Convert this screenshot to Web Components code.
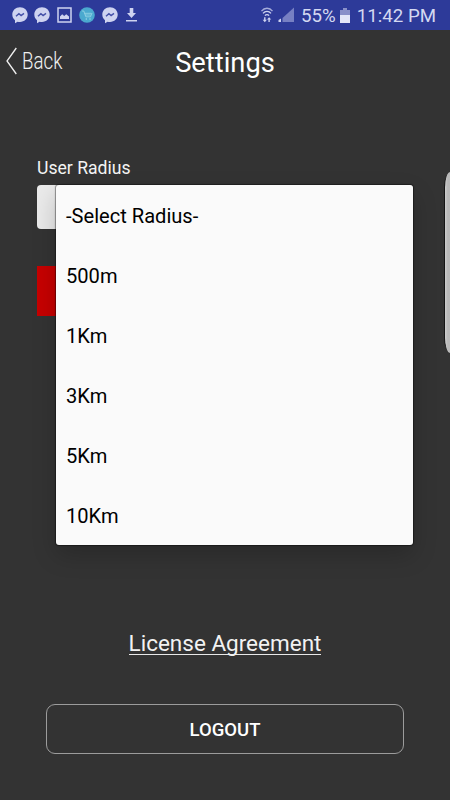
<!DOCTYPE html>
<html lang="en">
<head>
<meta charset="utf-8">
<title>Settings</title>
<style>
  body {
    margin: 0;
    width: 450px;
    height: 800px;
    overflow: hidden;
    background: #333;
    font-family: Roboto, "Liberation Sans", sans-serif;
  }
</style>
</head>
<body>
<settings-page>
  <status-bar slot="status" battery="55%" time="11:42 PM"></status-bar>
  <nav-bar slot="nav" back="Back">Settings</nav-bar>
  <radius-field label="User Radius">
    <radius-menu>
      <radius-option>-Select Radius-</radius-option>
      <radius-option>500m</radius-option>
      <radius-option>1Km</radius-option>
      <radius-option>3Km</radius-option>
      <radius-option>5Km</radius-option>
      <radius-option>10Km</radius-option>
    </radius-menu>
  </radius-field>
  <text-link slot="footer">License Agreement</text-link>
  <outline-button slot="footer">LOGOUT</outline-button>
</settings-page>

<script>
const define = (name, html) => {
  if (customElements.get(name)) return;
  customElements.define(
    name,
    class extends HTMLElement {
      constructor() {
        super();
        const shadowRoot = this.attachShadow({ mode: 'open' });
        shadowRoot.innerHTML = html;
        // [data-attr] nodes show the value of the host attribute
        shadowRoot.querySelectorAll('[data-attr]').forEach(node => {
          node.textContent = this.getAttribute(node.dataset.attr);
        });
      }
    }
  );
};

define('settings-page', `
  <style>
    :host {
      display: flex;
      flex-direction: column;
      position: relative;
      width: 450px;
      height: 800px;
      background: #333;
      overflow: hidden;
    }
    main { flex: 1; padding: 63px 37px 0; }
    footer {
      display: flex;
      flex-direction: column;
      align-items: center;
      gap: 49px;
      padding: 0 46px 46px;
    }
    /* edge panel handle */
    .edge {
      position: absolute;
      left: 444px;
      top: 172px;
      width: 12px;
      height: 181px;
      box-sizing: border-box;
      border-left: 1px solid #161616;
      border-radius: 7px / 18px;
      background: linear-gradient(90deg, #cdcdcd, #b9b9b9 25%, #bcbcbc);
    }
  </style>
  <slot name="status"></slot>
  <slot name="nav"></slot>
  <main><slot></slot></main>
  <footer><slot name="footer"></slot></footer>
  <div class="edge"></div>
`);

define('messenger-icon', `
  <style>
    :host { display: block; width: 16px; height: 17px; }
    svg { display: block; }
  </style>
  <svg width="16" height="17" viewBox="0 0 16 17">
    <path fill="#ced3f0" d="M8 .3C3.600.3.3 3.500.3 7.600c0 2.300 1 4.300 2.700 5.700v2.900l2.600-1.500c.8.200 1.500.3 2.400.3 4.400 0 7.700-3.200 7.700-7.400S12.400.3 8 .3z"/>
    <path d="M4 9.300 6.900 6.700l2.200 1.900 2.900-2.200" fill="none" stroke="#4450a8" stroke-width="1.400"/>
  </svg>
`);

define('status-bar', `
  <style>
    :host {
      display: flex;
      justify-content: space-between;
      align-items: center;
      box-sizing: border-box;
      height: 30px;
      padding: 0 14px 0 11.500px;
      background: #2d3a99;
      color: #d3d8f1;
      line-height: 30px;
    }
    .group { display: flex; align-items: center; }
    .notices { gap: 6.800px; }
    svg { display: block; flex: none; }
    .percent { margin-left: 7px; font-size: 18.700px; }
    .battery { margin-left: 4px; }
    .time { margin-left: 7px; font-size: 18.700px; }
    span { position: relative; top: 1px; white-space: nowrap; }
  </style>
  <div class="group notices">
    <messenger-icon></messenger-icon>
    <messenger-icon></messenger-icon>
    <svg width="15" height="16" viewBox="0 0 15 16">
      <rect x="1" y="1" width="13" height="14" fill="none" stroke="#ced3f0" stroke-width="1.500"/>
      <path d="M3 12V9.500l2.200-2.300 2 1.700 2-1.700L12 9.500V12z" fill="#ced3f0"/>
    </svg>
    <svg width="16" height="16" viewBox="0 0 16 16">
      <circle cx="8" cy="8" r="7.800" fill="#4ba9cf"/>
      <path d="M3 4h1.800l2 5.800h4.700L13 6M5.500 6.300h6.800M6.100 8h5.700" fill="none" stroke="#a5dcea" stroke-width=".7"/>
      <circle cx="7.300" cy="12" r=".7" fill="#a5dcea"/>
      <circle cx="11" cy="12" r=".7" fill="#a5dcea"/>
    </svg>
    <messenger-icon></messenger-icon>
    <svg width="13" height="14" viewBox="0 0 13 14" style="margin-left:1px">
      <path d="M4.700 0h3.600v5H11L6.500 10 2 5h2.700z" fill="#ced3f0"/>
      <path d="M1 12h11v1.500H1z" fill="#ced3f0"/>
    </svg>
  </div>
  <div class="group">
    <svg width="14" height="16" viewBox="0 0 14 16">
      <g fill="none" stroke="#ced3f0" stroke-width="1.300">
        <path d="M1.500 4.200c3-3.900 8-3.900 11 0" opacity=".75"/>
        <path d="M3 6.400c2.200-2.600 5.800-2.600 8 0"/>
        <path d="M5 8.600c1-1.400 3-1.400 4 0"/>
      </g>
      <path d="M4.800 15.200 2.700 12.800h1.400V10.300h1.400v2.500h1.400zM9.100 10.200l2.100 2.400H9.800v2.500H8.400v-2.500H7z" fill="#ced3f0"/>
    </svg>
    <svg width="16" height="16" viewBox="0 0 16 16" style="margin-left:4px">
      <path d="M16 .5V15H4.500v-4z" fill="#7780c3"/>
      <path d="M.5 13 3 11.500V15H.5z" fill="#ced3f0"/>
    </svg>
    <span class="percent" data-attr="battery"></span>
    <svg class="battery" width="10" height="15" viewBox="0 0 10 15">
      <path d="M3 0h4v2h3v5H0V2h3z" fill="#8990c9"/>
      <path d="M0 7h10v8H0z" fill="#e3e6f8"/>
    </svg>
    <span class="time" data-attr="time"></span>
  </div>
`);

define('nav-bar', `
  <style>
    :host {
      display: grid;
      grid-template-columns: 90px 1fr 90px;
      align-items: center;
      height: 64px;
      color: #fff;
    }
    .back { display: flex; align-items: center; gap: 5px; padding: 0 0 2px 6px; color: #f0f0f0; }
    .back svg { flex: none; }
    .back span {
      font: 300 24px/28px Roboto, sans-serif;
      transform: scaleX(.78);
      transform-origin: left;
    }
    h1 {
      margin: 0;
      padding-top: 1px;
      text-align: center;
      font-size: 27.300px;
      font-weight: 400;
      line-height: 32px;
    }
  </style>
  <div class="back">
    <svg width="11" height="28" viewBox="0 0 11 28"><path d="M10.300 1 1 14l9.300 13" fill="none" stroke="#f0f0f0" stroke-width="1.300"/></svg>
    <span data-attr="back"></span>
  </div>
  <h1><slot></slot></h1>
`);

define('radius-field', `
  <style>
    :host { display: block; position: relative; }
    label {
      display: block;
      height: 28px;
      color: #f4f4f4;
      font-size: 17.600px;
      line-height: 22px;
    }
    .input {
      height: 44px;
      border-radius: 4px;
      background: #eaeaea;
    }
    .save { height: 50px; margin-top: 37px; background: #c60000; }
    .popup { position: absolute; left: 19px; top: 28px; }
  </style>
  <label data-attr="label"></label>
  <div class="input"></div>
  <div class="save"></div>
  <div class="popup"><slot></slot></div>
`);

define('radius-menu', `
  <style>
    :host {
      display: flex;
      flex-direction: column;
      width: 356.500px;
      height: 360px;
      border-radius: 3px;
      background: #fafafa;
      box-shadow: 0 0 1px 1px rgba(0, 0, 0, .4), 0 10px 24px rgba(0, 0, 0, .2);
    }
  </style>
  <slot></slot>
`);

define('radius-option', `
  <style>
    :host {
      display: flex;
      align-items: center;
      height: 60px;
      padding: 2px 10px 0;
      box-sizing: border-box;
      color: #000;
      font-size: 20.100px;
    }
  </style>
  <slot></slot>
`);

define('text-link', `
  <style>
    :host { display: block; }
    a {
      display: block;
      border-bottom: 1px solid #e8e8e8;
      color: #f2f2f2;
      font-size: 22.500px;
      line-height: 22px;
      white-space: nowrap;
    }
  </style>
  <a><slot></slot></a>
`);

define('outline-button', `
  <style>
    :host { display: block; align-self: stretch; }
    button {
      display: block;
      width: 100%;
      height: 50px;
      padding: 1px 0 0;
      border: 1px solid #9c9c9c;
      border-radius: 9px;
      background: none;
      color: #fff;
      font: 500 18.500px Roboto, sans-serif;
    }
  </style>
  <button><slot></slot></button>
`);
</script>
</body>
</html>
